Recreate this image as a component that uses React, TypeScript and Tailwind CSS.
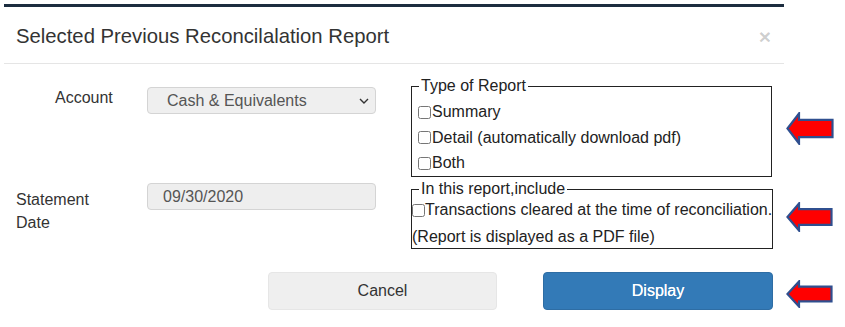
import React from "react";

function Arrow({ w, h }: { w: number; h: number }) {
  const head = 13;
  const t = h * 0.24;
  const b = h * 0.76;
  return (
    <svg width={w} height={h} viewBox={`0 0 ${w} ${h}`} className="block">
      <polygon
        points={`1.5,${h / 2} ${head},1.5 ${head},${t} ${w - 1.5},${t} ${w - 1.5},${b} ${head},${b} ${head},${h - 1.5}`}
        fill="#ff0000"
        stroke="#2f4f8f"
        strokeWidth={2.2}
        strokeLinejoin="miter"
      />
    </svg>
  );
}

function CheckRow({ label, inset }: { label: string; inset?: boolean }) {
  return (
    <label className="flex h-[25.5px] items-center">
      <input type="checkbox" className={`m-0 h-[13px] w-[13px] ${inset ? "ml-[6px]" : ""} mr-[1px]`} />
      <span>{label}</span>
    </label>
  );
}

export default function App() {
  return (
    <div className="flex h-[327px] w-[845px] overflow-hidden bg-white font-['Liberation_Sans',Arial,sans-serif] text-[16px]">
      {/* modal */}
      <div className="ml-[4px] mt-[4px] w-[780px] border-t-[3px] border-[#1c2d3f]">
        <div className="flex items-center justify-between border-b border-[#e5e5e5] pb-[15px] pl-[12px] pr-[13px] pt-[18px]">
          <h4 className="text-[20.3px] leading-[23px] text-[#333]">Selected Previous Reconcilalation Report</h4>
          <span className="text-[21px] font-bold leading-none text-black/20">×</span>
        </div>

        <div className="flex px-[12px]">
          {/* left column */}
          <div className="w-[360px] pt-[23px] text-[#333]">
            <div className="flex h-[27px]">
              <div className="w-[131px] pl-[39px] pt-[2px] leading-[18px]">Account</div>
              <div className="flex h-[27px] w-[229px] items-center justify-between rounded-[4px] border border-[#d4d4d4] bg-[#efefef] pl-[19px] pr-[5px] text-[#555]">
                <span>Cash &amp; Equivalents</span>
                <svg width="10" height="6" viewBox="0 0 10 6" className="mr-[1px]">
                  <path d="M1 1l4 4 4-4" fill="none" stroke="#333" strokeWidth="1.4" />
                </svg>
              </div>
            </div>

            <div className="mt-[69px] flex">
              <div className="w-[131px] pt-[5px] leading-[23px]">
                Statement
                <br />
                Date
              </div>
              <div className="flex h-[27px] w-[229px] items-center rounded-[4px] border border-[#d4d4d4] bg-[#eeeeee] pl-[15px] text-[#555]">
                09/30/2020
              </div>
            </div>
          </div>

          {/* right column */}
          <div className="ml-[35px] w-[361px] pt-[13px] text-[#222]">
            <fieldset className="border border-[#222] pb-0 pt-[4.5px]">
              <legend className="ml-[7px] px-[2px] leading-[18px]">Type of Report</legend>
              <CheckRow inset label="Summary" />
              <CheckRow inset label="Detail (automatically download pdf)" />
              <CheckRow inset label="Both" />
            </fieldset>

            <fieldset className="mt-[3px] border border-[#222]">
              <legend className="ml-[7px] px-[2px] leading-[18px]">In this report,include</legend>
              <label className="flex h-[24px] items-center whitespace-nowrap">
                <input type="checkbox" className="m-0 h-[13px] w-[13px]" />
                <span>Transactions cleared at the time of reconciliation.</span>
              </label>
              <div className="mt-[3px] flex h-[23px] items-center">(Report is displayed as a PDF file)</div>
            </fieldset>
          </div>
        </div>

        <div className="flex justify-end gap-[46px] pr-[11px] pt-[23px]">
          <button className="h-[38px] w-[229px] rounded-[4px] border border-[#e6e6e6] bg-[#efefef] text-[#333]">
            Cancel
          </button>
          <button className="h-[38px] w-[230px] rounded-[4px] border border-[#2e6da4] bg-[#337ab7] text-white [text-shadow:0_0_0.4px_#fff]">
            Display
          </button>
        </div>
      </div>

      {/* annotation arrows */}
      <div className="ml-[2px] flex flex-col pt-[112px]">
        <Arrow w={48} h={33} />
        <div className="mt-[57px]">
          <Arrow w={47} h={30} />
        </div>
        <div className="mt-[48px]">
          <Arrow w={47} h={28} />
        </div>
      </div>
    </div>
  );
}
